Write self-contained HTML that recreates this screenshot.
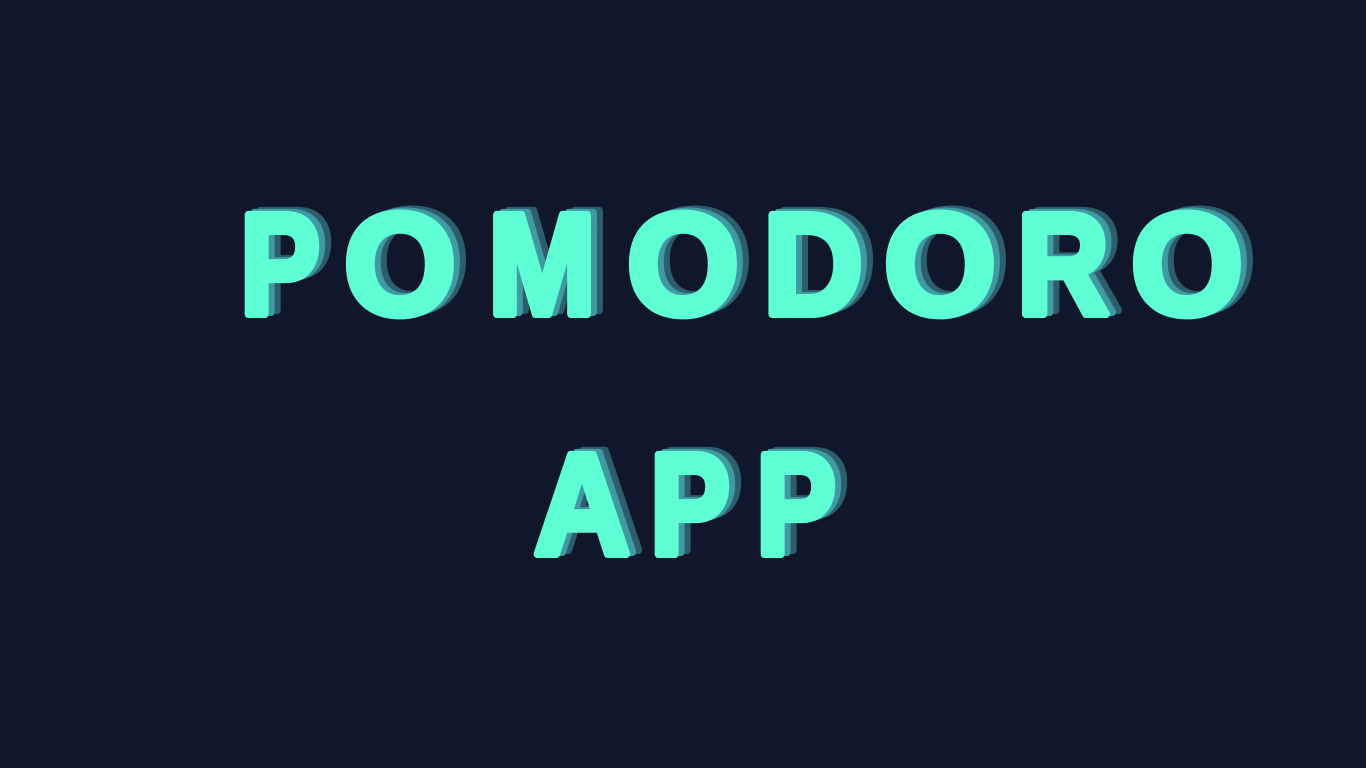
<!DOCTYPE html>
<html><head><meta charset="utf-8"><style>
html,body{margin:0;padding:0;background:#10172a;width:1366px;height:768px;overflow:hidden}
svg{display:block}
text{font-family:"Liberation Sans",sans-serif;font-weight:bold;font-size:144px;stroke-linejoin:round;stroke-linecap:round;stroke-width:8px;text-anchor:middle}
.s2{fill:#2d5e6c;stroke:#2d5e6c}
.s1{fill:#3f9aa2;stroke:#3f9aa2}
.f{fill:#5effd5;stroke:#5effd5}
</style></head><body>
<svg width="1366" height="768" viewBox="0 0 1366 768">
<rect width="1366" height="768" fill="#10172a"/>
<defs>
<g id="w1">
<text x="280" y="314" textLength="80" lengthAdjust="spacingAndGlyphs">P</text><text x="400" y="314">O</text><text x="542" y="314" textLength="108" lengthAdjust="spacingAndGlyphs">M</text><text x="683" y="314">O</text><text x="813" y="314" textLength="100" lengthAdjust="spacingAndGlyphs">D</text><text x="940" y="314">O</text><text x="1063" y="314" textLength="92" lengthAdjust="spacingAndGlyphs">R</text><text x="1187" y="314">O</text>
<text x="582" y="554" textLength="96" lengthAdjust="spacingAndGlyphs">A</text><text x="690" y="554" textLength="80" lengthAdjust="spacingAndGlyphs">P</text><text x="796" y="554" textLength="80" lengthAdjust="spacingAndGlyphs">P</text>
</g>
</defs>
<use href="#w1" class="s2" x="12" y="-4"/>
<use href="#w1" class="s1" x="6" y="-2"/>
<use href="#w1" class="f"/>
</svg>
</body></html>
